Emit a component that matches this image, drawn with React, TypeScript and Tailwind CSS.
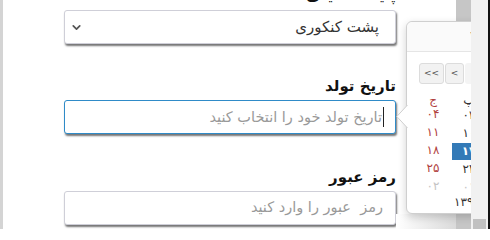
import { ChevronDown } from "lucide-react";

const font = { fontFamily: '"DejaVu Sans", Tahoma, sans-serif' };

const fieldBase =
  "h-[34px] w-full rounded-[3px] border bg-white shadow-[1px_2px_2px_rgba(0,0,0,0.55)]";

// left column = red (جمعه), right column = پنجشنبه, cut off by the viewport
const rows: { fri: string; thu: string; muted?: boolean; active?: boolean }[] = [
  { fri: "۰۴", thu: "۰۳" },
  { fri: "۱۱", thu: "۱۰" },
  { fri: "۱۸", thu: "۱۷", active: true },
  { fri: "۲۵", thu: "۲۴" },
  { fri: "۰۲", thu: "۰۱", muted: true },
];

function Calendar() {
  return (
    <div className="absolute left-[403px] top-[21px] h-[193px] w-[200px] rounded-md border border-[#cfcfcf] bg-white shadow-[0_3px_8px_rgba(0,0,0,0.18)]">
      {/* pointer toward the focused input */}
      <svg className="absolute left-[-11px] top-[83px]" width="12" height="24" viewBox="0 0 12 24">
        <path d="M11.5 0 L0.8 11.5 L11.5 23" fill="white" stroke="#cfcfcf" strokeWidth="1" />
      </svg>
      <div className="flex h-[30px] items-center rounded-t-md border-b border-[#e5e5e5] bg-[#fafafa] pl-[62px] text-[11px] text-[#555]">
        ۱۳۹۸
      </div>
      <div className="mt-[11px] flex gap-[1px] pl-[12px]">
        <button className="flex h-[21px] w-[25px] items-center justify-center rounded-[3px] border border-[#dcdcdc] bg-[#f2f2f2] text-[9px] text-[#555]">
          &lt;&lt;
        </button>
        <button className="flex h-[21px] w-[19px] items-center justify-center rounded-[3px] border border-[#dcdcdc] bg-[#f2f2f2] text-[9px] text-[#555]">
          &lt;
        </button>
        <div className="h-[21px] w-[60px] rounded-[3px] bg-[#f4f4f4]" />
      </div>
      <div className="mt-[10px] pl-[9px] text-[12px]">
        <div className="grid h-[12px] grid-cols-[34px_34px] gap-x-[2px] leading-[12px]">
          <span className="text-center text-[#b0413e]">ج</span>
          <span className="text-center text-[#333]">پ</span>
        </div>
        {rows.map((r) => (
          <div key={r.fri} className="grid h-[18px] grid-cols-[34px_34px] gap-x-[2px] leading-[17px]">
            <span className={`text-center ${r.muted ? "text-[#c4c4c4]" : "text-[#b0413e]"}`}>{r.fri}</span>
            <span
              className={`my-[0.5px] text-center ${
                r.active ? "bg-[#337ab7] font-bold text-white" : r.muted ? "text-[#c4c4c4]" : "text-[#333]"
              }`}
            >
              {r.thu}
            </span>
          </div>
        ))}
        <div className="pl-[38px] text-[12px] leading-[12px] text-[#333]">۱۳۹۸/۰۸/۱۷</div>
      </div>
    </div>
  );
}

export default function App() {
  return (
    <div className="flex h-[229px] w-[490px] overflow-hidden bg-white" style={font}>
      <div className="w-[3px] shrink-0 bg-[#d4d4d4]" />
      <div className="relative flex w-[468px] shrink-0 overflow-hidden">
        <form dir="rtl" className="ml-[61px] mt-[-16px] w-[332px] shrink-0">
          <label className="mb-[4px] block h-[22px] text-[15px] font-bold leading-[22px] text-[#111]">پایه تحصیلی</label>
          <div className={`${fieldBase} flex items-center justify-between border-[#cfcfd8] pl-[5px] pr-[16px]`}>
            <span className="text-[15px] text-[#333]">پشت کنکوری</span>
            <ChevronDown className="h-[13px] w-[13px] text-[#555]" strokeWidth={3.2} />
          </div>

          <label className="mb-[3px] mt-[31px] block h-[22px] text-[15px] font-bold leading-[22px] text-[#111]">تاریخ تولد</label>
          <div className={`${fieldBase} flex items-center border-[#2f8bc8] pr-[11px]`}>
            <span className="border-r border-[#222] pr-[1px] text-[14.5px] leading-[20px] text-[#999]">تاریخ تولد خود را انتخاب کنید</span>
          </div>

          <label className="mb-[3px] mt-[32px] block h-[22px] text-[15px] font-bold leading-[22px] text-[#111]">رمز عبور</label>
          <div className={`${fieldBase} flex items-center border-[#cfcfd8] pr-[12px]`}>
            <span className="text-[14.5px] text-[#999]">رمز &nbsp;عبور را وارد کنید</span>
          </div>
        </form>
        <div className="flex w-[60px] shrink-0 flex-col justify-end">
          <div className="h-[15px] bg-gradient-to-r from-white to-[#dadada]" />
        </div>
        <div className="w-[15px] shrink-0 bg-[#c6c6c6]" />
        <Calendar />
      </div>
      <div className="flex w-[17px] shrink-0 flex-col justify-end bg-[#f1f1f1] px-[2px]">
        <div className="h-[10px] bg-[#c1c1c1]" />
      </div>
      <div className="w-[2px] shrink-0 bg-[#111]" />
    </div>
  );
}
